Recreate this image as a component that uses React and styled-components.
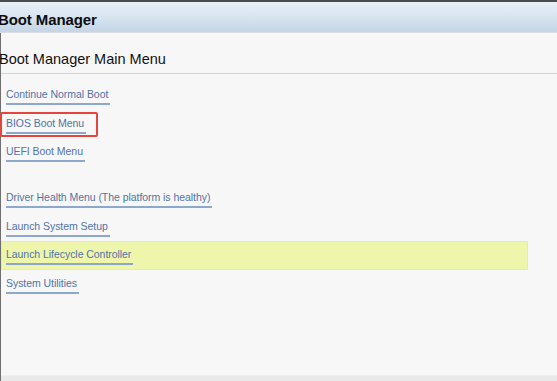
import React from 'react'
import styled, { createGlobalStyle } from 'styled-components'

const GlobalStyle = createGlobalStyle`
    html, body {
        margin: 0;
        padding: 0;
        background: #f7f7f7;
        font-family: "Liberation Sans", Arial, sans-serif;
        overflow: hidden;
    }
`;

const menuGroups = [
    [
        { label: 'Continue Normal Boot' },
        { label: 'BIOS Boot Menu', boxed: true },
        { label: 'UEFI Boot Menu' },
    ],
    [
        { label: 'Driver Health Menu (The platform is healthy)' },
        { label: 'Launch System Setup' },
        { label: 'Launch Lifecycle Controller', active: true },
        { label: 'System Utilities' },
    ],
]

function App() {
    return (
        <>
            <GlobalStyle />
            <PageStyled>
                <TopBar />
                <Header>
                    <Title>Boot Manager</Title>
                </Header>
                <Body>
                    <SubHeader>
                        <SubTitle>Boot Manager Main Menu</SubTitle>
                    </SubHeader>
                    <Menu>
                        {menuGroups.map((group, gi) => (
                            <Group key={gi}>
                                {group.map(item => (
                                    <Row key={item.label} $active={item.active}>
                                        <MenuLink href="#" onClick={e => e.preventDefault()}>
                                            {item.label}
                                        </MenuLink>
                                        {item.boxed && <FocusBox />}
                                    </Row>
                                ))}
                            </Group>
                        ))}
                    </Menu>
                    <Footer />
                </Body>
            </PageStyled>
        </>
    )
}

const PageStyled = styled.div`
    width: 557px;
    height: 381px;
    display: flex;
    flex-direction: column;
    background: #f7f7f7;
`;

const TopBar = styled.div`
    height: 2px;
    background: #4b4b4b;
    flex-shrink: 0;
`;

const Header = styled.div`
    height: 31px;
    flex-shrink: 0;
    display: flex;
    align-items: center;
    padding-top: 5px;
    box-sizing: border-box;
    background: linear-gradient(to bottom, #e9f1f9 0%, #d9e5f1 45%, #c5d5e6 100%);
    border-bottom: 1px solid #dcdcdc;
`;

const Title = styled.h1`
    margin: 0 0 0 -2px;
    font-size: 15px;
    font-weight: bold;
    line-height: 16px;
    color: #0d0d0d;
    letter-spacing: -0.1px;
`;

const Body = styled.div`
    flex: 1;
    display: flex;
    flex-direction: column;
    border-left: 1px solid #6f6f6f;
`;

const SubHeader = styled.div`
    height: 41px;
    flex-shrink: 0;
    display: flex;
    align-items: flex-end;
    padding-bottom: 6px;
    box-sizing: border-box;
    border-bottom: 1px solid #d3d3d3;
`;

const SubTitle = styled.h2`
    margin: 0 0 0 -2px;
    font-size: 14.5px;
    font-weight: normal;
    line-height: 16px;
    color: #111;
`;

const Menu = styled.div`
    flex: 1;
    display: flex;
    flex-direction: column;
    gap: 17.5px;
    padding-top: 7px;
`;

const Group = styled.div`
    display: flex;
    flex-direction: column;
`;

const Row = styled.div`
    position: relative;
    display: flex;
    align-items: flex-start;
    width: 527px;
    height: 28.5px;
    box-sizing: border-box;
    padding: 7px 0 0 5px;
    background: ${p => p.$active ? '#eef6ab' : 'transparent'};
    box-shadow: ${p => p.$active ? 'inset 0 0 0 1px #e6eea0' : 'none'};
`;

const MenuLink = styled.a`
    display: block;
    font-size: 10.5px;
    line-height: 13px;
    color: #5373a6;
    text-decoration: none;
    padding: 0 2px 2px 0;
    border-bottom: 2px solid #8ea8cc;
    letter-spacing: -0.05px;
`;

const FocusBox = styled.span`
    position: absolute;
    left: -1px;
    top: 2.5px;
    width: 98px;
    height: 25px;
    box-sizing: border-box;
    border: 2px solid #e5453d;
    border-radius: 2px;
    pointer-events: none;
`;

const Footer = styled.div`
    height: 5px;
    flex-shrink: 0;
    background: #e9e9e9;
    border-top: 1px solid #efefef;
`;

export default App;
